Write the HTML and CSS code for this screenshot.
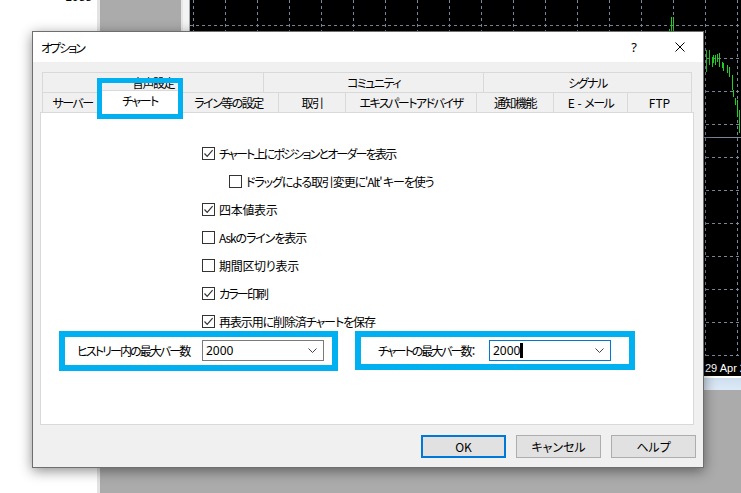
FILE: index.html
```html
<!DOCTYPE html>
<html lang="ja">
<head>
  <meta charset="UTF-8" />
  <meta name="viewport" content="width=device-width, initial-scale=1.0" />
  <title>オプション</title>
  <link rel="stylesheet" href="styles.css">
</head>
<body>
  <div class="desktop">
    <div class="side-list">
      <div class="price">1988</div>
    </div>

    <div class="chart-window">
      <svg class="chart" width="551" height="376" viewBox="0 0 551 376">
        <rect width="551" height="376" fill="#000" />
        <path class="grid" d="M3.5 0V356M35.5 0V356M67.5 0V356M99.5 0V356M131.5 0V356M163.5 0V356M195.5 0V356M227.5 0V356M259.5 0V356M291.5 0V356M323.5 0V356M355.5 0V356M387.5 0V356M419.5 0V356M451.5 0V356M483.5 0V356M515.5 0V356M547.5 0V356" />
        <path class="grid" d="M0 25.5H551M0 58.5H551M0 91.5H551M0 124.5H551M0 157.5H551M0 190.5H551M0 223.5H551M0 256.5H551M0 289.5H551M0 322.5H551M0 355.5H551" />
        <path class="price-line" d="M0 137.5H551" />
        <path class="bars" d="M479.5 29V31M481.5 17V31M483.5 17V31M516.5 50V72M519.5 50V65M522.5 57V67M523.5 55V63M525.5 55V65M527.5 54V62M529.5 53V67M532.5 62V68M533.5 63V71M537.5 65V73M539.5 67V77M542.5 75V90M543.5 90V97M545.5 98V105M547.5 100V117M549.5 110V133" />
        <text class="axis" x="515" y="372">29 Apr 2021</text>
      </svg>
      <div class="scrollbar"></div>
    </div>

    <div class="dialog">
      <div class="titlebar">
        <span class="title">オプション</span>
        <span class="tb-btn tb-help">?</span>
        <span class="tb-btn">
          <svg width="10" height="10" viewBox="0 0 10 10"><path d="M0.5 0.5L9.5 9.5M9.5 0.5L0.5 9.5" stroke="#000" stroke-width="1" fill="none" /></svg>
        </span>
      </div>

      <div class="dialog-body">
        <div class="tabs">
          <div class="tab-row row-top">
            <div class="tab">音声設定</div>
            <div class="tab">コミュニティ</div>
            <div class="tab">シグナル</div>
          </div>
          <div class="tab-row row-bottom">
            <div class="tab">サーバー</div>
            <div class="tab active">チャート</div>
            <div class="tab">ライン等の設定</div>
            <div class="tab">取引</div>
            <div class="tab">エキスパートアドバイザ</div>
            <div class="tab">通知機能</div>
            <div class="tab spaced">E - メール</div>
            <div class="tab latin">FTP</div>
          </div>
        </div>

        <div class="panel">
          <div class="checks">
            <label class="check"><span class="box"><svg width="11" height="11" viewBox="0 0 11 11"><path d="M1.5 5.5L4.2 8.3L9.6 2.2" /></svg></span>チャート上にポジションとオーダーを表示</label>
            <label class="check sub mid"><span class="box"></span>ドラッグによる取引変更に'Alt' キーを使う</label>
            <label class="check kanji"><span class="box"><svg width="11" height="11" viewBox="0 0 11 11"><path d="M1.5 5.5L4.2 8.3L9.6 2.2" /></svg></span>四本値表示</label>
            <label class="check mid"><span class="box"></span>Askのラインを表示</label>
            <label class="check kanji"><span class="box"></span>期間区切り表示</label>
            <label class="check"><span class="box"><svg width="11" height="11" viewBox="0 0 11 11"><path d="M1.5 5.5L4.2 8.3L9.6 2.2" /></svg></span>カラー印刷</label>
            <label class="check mid"><span class="box"><svg width="11" height="11" viewBox="0 0 11 11"><path d="M1.5 5.5L4.2 8.3L9.6 2.2" /></svg></span>再表示用に削除済チャートを保存</label>
          </div>

          <div class="fields">
            <div class="field field-history">
              <span class="field-label">ヒストリー内の最大バー数</span>
              <div class="combo">
                <span class="combo-value">2000</span>
                <svg class="chevron" width="9" height="5" viewBox="0 0 9 5"><path d="M0.5 0.5L4.5 4.5L8.5 0.5" /></svg>
              </div>
            </div>
            <div class="field field-chart">
              <span class="field-label">チャートの最大バー数：</span>
              <div class="combo focused">
                <span class="combo-value">2000</span><span class="caret"></span>
                <svg class="chevron" width="9" height="5" viewBox="0 0 9 5"><path d="M0.5 0.5L4.5 4.5L8.5 0.5" /></svg>
              </div>
            </div>
          </div>
        </div>

        <div class="buttons">
          <button class="btn default latin">OK</button>
          <button class="btn">キャンセル</button>
          <button class="btn">ヘルプ</button>
        </div>
      </div>

      <!-- highlight boxes drawn over the screenshot -->
      <div class="mark mark-tab"></div>
      <div class="mark mark-history"></div>
      <div class="mark mark-chart"></div>
    </div>
  </div>
</body>
</html>
```

FILE: styles.css
```css
body {
  margin: 0;
  font-family: "Noto Sans CJK JP", sans-serif;
  font-size: 12px;
  font-feature-settings: "palt";
  letter-spacing: -1.5px;
  color: #000;
}
.latin { letter-spacing: 0; }
.desktop {
  position: relative;
  width: 741px;
  height: 493px;
  overflow: hidden;
  background: #ababab;
}

/* background windows */
.side-list {
  position: absolute;
  left: 0;
  top: 0;
  bottom: 0;
  width: 97px;
  background: #fff;
  border-right: 3px solid #e3e3e3;
}
.price {
  margin-top: -9px;
  padding-right: 5px;
  text-align: right;
  letter-spacing: 0;
  font: 12px/12px "Liberation Sans", sans-serif;
}
.chart-window {
  position: absolute;
  left: 181px;
  top: 0;
  width: 560px;
  height: 390px;
  box-sizing: border-box;
  border-left: 2px solid #e6e6e6;
  padding-left: 6px;
  background: #f3f3f3;
}
.chart {
  display: block;
  border-left: 1px solid #a2aab2;
}
.chart .grid {
  stroke: #778899;
  stroke-width: 1;
  stroke-dasharray: 3 3;
  fill: none;
}
.chart .price-line { stroke: #778899; stroke-width: 1; }
.chart .bars { stroke: #22d022; stroke-width: 1; fill: none; }
.chart .axis {
  fill: #fff;
  letter-spacing: 0;
  font: 11px "Liberation Sans", sans-serif;
}
.scrollbar {
  height: 14px;
  margin-left: 1px;
  background: linear-gradient(#ffffff 0 2px, #cfdff0 2px, #dde9f5);
}

/* dialog */
.dialog {
  position: absolute;
  left: 32px;
  top: 31px;
  width: 672px;
  height: 437px;
  box-sizing: border-box;
  border: 1px solid #6e6e6e;
  background: #f0f0f0;
  box-shadow: 0 3px 12px rgba(0,0,0,0.45);
  display: flex;
  flex-direction: column;
}
.titlebar {
  height: 30px;
  background: #fff;
  display: flex;
  align-items: center;
}
.title { padding-left: 8px; letter-spacing: -2px; }
.tb-btn {
  width: 46px;
  height: 30px;
  display: flex;
  align-items: center;
  justify-content: center;
}
.tb-help {
  margin-left: auto;
  letter-spacing: 0;
  font-family: "Noto Sans", sans-serif;
  font-size: 13px;
}
.dialog-body {
  padding: 10px 9px 0 7px;
}

/* tabs */
.tabs { margin: 0 2px; }
.tab-row {
  display: grid;
  height: 20px;
  border-right: 1px solid #d9d9d9;
}
.row-top { grid-template-columns: 221px 220px 1fr; }
.row-bottom { grid-template-columns: 60px 76px 100px 67px 131px 77px 74px 1fr; }
.tab {
  display: flex;
  align-items: center;
  justify-content: center;
  border-top: 1px solid #d9d9d9;
  border-left: 1px solid #d9d9d9;
  white-space: pre;
  line-height: 1;
}
.tab.spaced { word-spacing: 3px; }
.tab.active {
  position: relative;
  z-index: 1;
  margin: -2px -2px -1px;
  padding-bottom: 3px;
  background: #fff;
  border-right: 1px solid #d9d9d9;
}

/* tab page */
.panel {
  height: 313px;
  box-sizing: border-box;
  background: #fff;
  border: 1px solid #d9d9d9;
}
.checks {
  padding: 26px 0 0 161px;
}
.check {
  display: flex;
  align-items: center;
  height: 28px;
  white-space: nowrap;
  letter-spacing: -1.8px;
}
.check.mid { letter-spacing: -1.1px; }
.check.kanji { letter-spacing: -0.3px; }
.check .box { margin-right: 4px; }
.check.sub { margin-left: 27px; }
.box {
  width: 13px;
  height: 13px;
  box-sizing: border-box;
  border: 1px solid #333;
  background: #fff;
  display: flex;
  align-items: center;
  justify-content: center;
}
.box path {
  fill: none;
  stroke: #333;
  stroke-width: 1.2;
}
.fields {
  display: flex;
  align-items: center;
  margin-top: 5px;
  padding-left: 36px;
}
.field {
  display: flex;
  align-items: center;
}
.field-label { white-space: nowrap; letter-spacing: -1.9px; }
.field-history .field-label { width: 125px; }
.field-chart { margin-left: 54px; }
.field-chart .field-label { width: 111px; letter-spacing: -2px; }
.combo {
  width: 122px;
  height: 21px;
  box-sizing: border-box;
  border: 1px solid #7a7a7a;
  background: #fff;
  display: flex;
  align-items: center;
  padding: 0 6px 0 3px;
}
.combo.focused { border-color: #0078d7; }
.combo-value {
  font-family: "Noto Sans", sans-serif;
  font-size: 12px;
  letter-spacing: 0;
}
.caret {
  width: 3px;
  height: 15px;
  background: #000;
}
.chevron { margin-left: auto; }
.chevron path { fill: none; stroke: #444; stroke-width: 1; }

/* buttons */
.buttons {
  display: flex;
  justify-content: flex-end;
  gap: 10px;
  margin: 10px -2px 0 0;
}
.btn {
  width: 85px;
  height: 23px;
  box-sizing: border-box;
  border: 1px solid #adadad;
  background: #e1e1e1;
  font: inherit;
  padding: 0;
}
.btn.default { border: 2px solid #0078d7; }

/* cyan annotation boxes */
.mark {
  position: absolute;
  z-index: 2;
  box-sizing: border-box;
  border: 6px solid #00b0f0;
}
.mark-tab {
  left: 64px;
  top: 46px;
  width: 86px;
  height: 41px;
  border-width: 5px;
}
.mark-history {
  left: 26px;
  top: 299px;
  width: 279px;
  height: 40px;
}
.mark-chart {
  left: 322px;
  top: 299px;
  width: 280px;
  height: 39px;
}
```
